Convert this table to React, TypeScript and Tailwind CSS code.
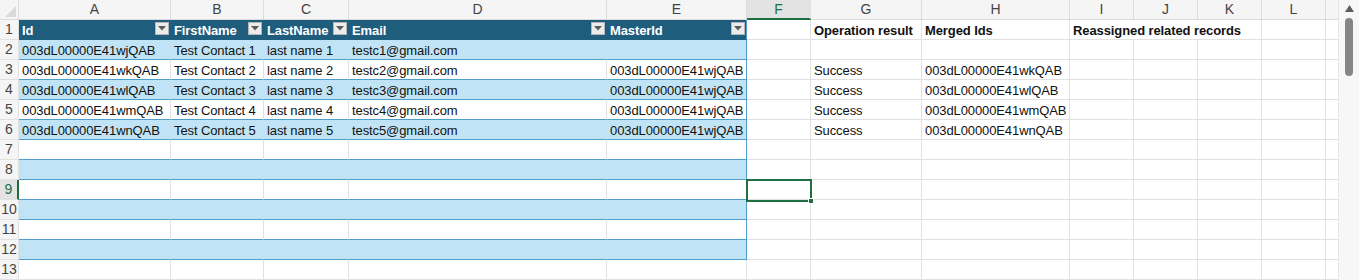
import React from 'react';

const COLS = ['A', 'B', 'C', 'D', 'E', 'F', 'G', 'H', 'I', 'J', 'K', 'L'];

type Contact = {
  id: string;
  first: string;
  last: string;
  email: string;
  master: string;
  result: string;
  merged: string;
};

const contacts: Contact[] = [
  { id: '003dL00000E41wjQAB', first: 'Test Contact 1', last: 'last name 1', email: 'testc1@gmail.com', master: '', result: '', merged: '' },
  { id: '003dL00000E41wkQAB', first: 'Test Contact 2', last: 'last name 2', email: 'testc2@gmail.com', master: '003dL00000E41wjQAB', result: 'Success', merged: '003dL00000E41wkQAB' },
  { id: '003dL00000E41wlQAB', first: 'Test Contact 3', last: 'last name 3', email: 'testc3@gmail.com', master: '003dL00000E41wjQAB', result: 'Success', merged: '003dL00000E41wlQAB' },
  { id: '003dL00000E41wmQAB', first: 'Test Contact 4', last: 'last name 4', email: 'testc4@gmail.com', master: '003dL00000E41wjQAB', result: 'Success', merged: '003dL00000E41wmQAB' },
  { id: '003dL00000E41wnQAB', first: 'Test Contact 5', last: 'last name 5', email: 'testc5@gmail.com', master: '003dL00000E41wjQAB', result: 'Success', merged: '003dL00000E41wnQAB' },
];

const txt = 'pt-[2px] pl-[3px] leading-[17px] whitespace-nowrap tracking-[-0.1px]';

function RowNum({ n, active }: { n: number; active?: boolean }) {
  return (
    <div
      className={`flex h-5 items-center justify-center border-b border-r text-[14px] leading-[19px] ${
        active
          ? 'border-b-[#e1e1e1] border-r-2 border-r-[#1e6e42] bg-[#e3e3e3] text-[#1e6e42]'
          : 'border-[#e1e1e1] bg-[#f5f5f5] text-[#444]'
      }`}
    >
      {n}
    </div>
  );
}

function Cell({ children, bold, span }: { children?: React.ReactNode; bold?: boolean; span?: boolean }) {
  return (
    <div
      className={`h-5 border-b border-r border-[#e1e1e1] bg-white text-[#111] ${txt} ${bold ? 'font-bold' : ''} ${
        span ? 'col-span-3' : ''
      }`}
    >
      {children}
    </div>
  );
}

function TableCell({ children, banded, last }: { children?: React.ReactNode; banded: boolean; last?: boolean }) {
  const right = last ? 'border-r-[#4e9fcb]' : banded ? 'border-r-[#c0e4f5]' : 'border-r-[#e1e1e1]';
  return (
    <div className={`h-5 border-b border-r border-b-[#4e9fcb] ${right} ${banded ? 'bg-[#c0e4f5]' : 'bg-white'} text-[#111] ${txt}`}>
      {children}
    </div>
  );
}

function HeadCell({ label, last }: { label: string; last?: boolean }) {
  return (
    <div
      className={`flex h-5 justify-between border-b border-r border-b-[#1f5d7d] bg-[#1f5d7d] font-bold text-white ${
        last ? 'border-r-[#4e9fcb]' : 'border-r-[#1f5d7d]'
      }`}
    >
      <span className={txt}>{label}</span>
      <span className="mr-[1px] mt-[2px] flex h-[13px] w-[14px] items-center justify-center border border-[#b5b5b5] bg-[#ececec]">
        <svg width="8" height="5" viewBox="0 0 8 5">
          <path d="M0 0 L8 0 L4 4.5 Z" fill="#5a5a5a" />
        </svg>
      </span>
    </div>
  );
}

export default function App() {
  const rows = Array.from({ length: 12 }, (_, i) => i + 2);

  return (
    <div className="flex h-[280px] w-[1359px] overflow-hidden bg-white font-['Liberation_Sans',Arial,sans-serif] text-[13px]">
      <div className="relative w-[1338px]">
        <div className="grid grid-cols-[19px_152px_93px_85px_258px_140px_64px_111px_148px_64px_64px_64px_64px_12px] grid-rows-[repeat(14,20px)]">
          {/* column letters */}
          <div className="relative h-5 border-b border-r border-[#dcdcdc] bg-[#f5f5f5]">
            <svg className="absolute bottom-[2px] right-[2px]" width="11" height="11" viewBox="0 0 11 11">
              <path d="M11 0 L11 11 L0 11 Z" fill="#dadada" />
            </svg>
          </div>
          {COLS.map((c) =>
            c === 'F' ? (
              <div
                key={c}
                className="h-5 border-b-2 border-r border-b-[#1e6e42] border-r-[#e1e1e1] bg-[#e3e3e3] text-center text-[14px] leading-[19px] text-[#1e6e42]"
              >
                {c}
              </div>
            ) : (
              <div key={c} className="h-5 border-b border-r border-[#dcdcdc] bg-[#f5f5f5] text-center text-[14px] leading-[19px] text-[#444]">
                {c}
              </div>
            )
          )}
          <div className="h-5 border-b border-[#dcdcdc] bg-[#f5f5f5]" />

          {/* row 1 */}
          <RowNum n={1} />
          <HeadCell label="Id" />
          <HeadCell label="FirstName" />
          <HeadCell label="LastName" />
          <HeadCell label="Email" />
          <HeadCell label="MasterId" last />
          <Cell />
          <Cell bold>Operation result</Cell>
          <Cell bold>Merged Ids</Cell>
          <Cell bold span>Reassigned related records</Cell>
          <Cell />
          <div className="h-5 border-b border-[#e1e1e1]" />

          {rows.map((r) => {
            const c = contacts[r - 2];
            const inTable = r <= 12;
            const banded = r % 2 === 0;
            return (
              <React.Fragment key={r}>
                <RowNum n={r} active={r === 9} />
                {inTable ? (
                  <>
                    <TableCell banded={banded}>{c?.id}</TableCell>
                    <TableCell banded={banded}>{c?.first}</TableCell>
                    <TableCell banded={banded}>{c?.last}</TableCell>
                    <TableCell banded={banded}>{c?.email}</TableCell>
                    <TableCell banded={banded} last>
                      {c?.master}
                    </TableCell>
                  </>
                ) : (
                  <>
                    <Cell />
                    <Cell />
                    <Cell />
                    <Cell />
                    <Cell />
                  </>
                )}
                <Cell />
                <Cell>{c?.result}</Cell>
                <Cell>{c?.merged}</Cell>
                <Cell />
                <Cell />
                <Cell />
                <Cell />
                <div className="h-5 border-b border-[#e1e1e1]" />
              </React.Fragment>
            );
          })}
        </div>

        {/* active cell F9 */}
        <div className="absolute left-[746px] top-[179px] h-[23px] w-[66px] border-2 border-[#1e6e42]" />
        <div className="absolute left-[808px] top-[198px] h-[6px] w-[6px] border border-white bg-[#1e6e42]" />
      </div>

      {/* vertical scrollbar */}
      <div className="flex w-[21px] flex-col items-center border-l border-[#e6e6e6] bg-[#f7f7f7] pt-[5px]">
        <svg width="9" height="7" viewBox="0 0 9 7">
          <path d="M4.5 0 L9 7 L0 7 Z" fill="#5f5f5f" />
        </svg>
        <div className="mt-[6px] h-[58px] w-[8px] rounded-full bg-[#858585]" />
      </div>
    </div>
  );
}
